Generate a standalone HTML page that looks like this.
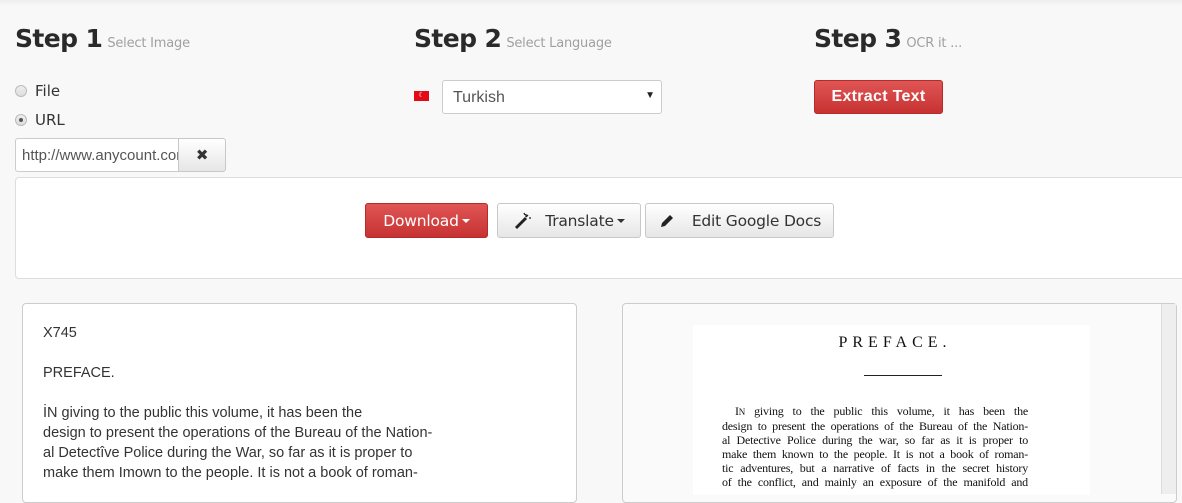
<!DOCTYPE html>
<html><head><meta charset="utf-8"><style>
*{box-sizing:border-box;margin:0;padding:0}
body{width:1182px;height:483px;overflow:hidden;background:#f8f8f8;font-family:"Liberation Sans",sans-serif;position:relative;color:#333}
.a{position:absolute}
h2{position:absolute;font-family:"DejaVu Sans","Liberation Sans",sans-serif;font-weight:bold;font-size:25px;color:#2a2a2a;letter-spacing:-0.6px;top:24px}
h2 small{font-family:"DejaVu Sans",sans-serif;font-weight:normal;font-size:13px;color:#a0a0a0;letter-spacing:-0.2px;margin-left:5px}
.radio{width:12px;height:12px;border-radius:50%;border:1px solid #bbb;background:linear-gradient(#eee,#ddd)}
.lbl{font-family:"DejaVu Sans",sans-serif;font-size:15px;color:#333}
.btn{position:absolute;border:1px solid #c8c8c8;border-radius:3px;background:linear-gradient(#fff,#e6e6e6);font-family:"DejaVu Sans",sans-serif;font-size:15.5px;color:#333;display:flex;align-items:center;justify-content:center;letter-spacing:-0.2px}
.red{background:linear-gradient(#e05555,#c73232);border-color:#b52a2a;color:#fff}
.caret{display:inline-block;border-left:4px solid transparent;border-right:4px solid transparent;border-top:4px solid currentColor;margin-left:3px;vertical-align:6px}
.ocr{font-size:14.5px;color:#333;line-height:20px}
.ser div{font-family:"Liberation Serif",serif;font-size:12px;color:#111;line-height:14px;text-align:justify;text-align-last:justify;white-space:nowrap;letter-spacing:-0.2px;word-spacing:-1px}
</style></head><body>
<div class="a" style="left:0;top:0;width:1182px;height:6px;background:linear-gradient(#eee,#f8f8f8)"></div>
<h2 style="left:15px">Step 1<small>Select Image</small></h2>
<h2 style="left:414px">Step 2<small>Select Language</small></h2>
<h2 style="left:814px">Step 3<small>OCR it ...</small></h2>

<div class="a radio" style="left:15px;top:85px"></div><div class="a lbl" style="left:35px;top:82px">File</div>
<div class="a radio" style="left:15px;top:114px;"><div style="width:4px;height:4px;border-radius:50%;background:#555;margin:3px"></div></div><div class="a lbl" style="left:35px;top:111px">URL</div>
<div class="a" style="left:15px;top:138px;width:165px;height:34px;background:#fff;border:1px solid #ccc;border-radius:3px 0 0 3px;font-size:15px;color:#555;padding:8px 6px;overflow:hidden;white-space:nowrap">http://www.anycount.com</div>
<div class="btn" style="left:178px;top:138px;width:48px;height:34px;border-radius:0 3px 3px 0;font-weight:bold;font-size:15px">✖</div>

<div class="a" style="left:414px;top:91px;width:15px;height:10px;background:#e30a17;color:#fff;font-size:7px;line-height:10px;text-align:center">☾</div>
<div class="a" style="left:442px;top:80px;width:220px;height:34px;background:#fff;border:1px solid #ccc;border-radius:3px;font-size:16px;color:#555;padding:8px 10px">Turkish<span style="position:absolute;right:6px;top:9px;font-size:10px;color:#222">▼</span></div>

<div class="btn red" style="left:814px;top:80px;width:129px;height:34px;font-family:'Liberation Sans',sans-serif;font-weight:bold;font-size:16px;letter-spacing:0.3px">Extract Text</div>

<div class="a" style="left:15px;top:177px;width:1180px;height:102px;background:#fff;border:1px solid #ddd;border-radius:4px"></div>
<div class="btn red" style="left:365px;top:203px;width:123px;height:35px">Download<span class="caret"></span></div>
<div class="btn" style="left:497px;top:203px;width:144px;height:35px"><svg width="20" height="18" viewBox="0 0 20 18" style="margin-right:12px"><path d="M3 16L13 6" stroke="#222" stroke-width="3"/><path d="M13 2v3M15 3l-2 2M11 1l1 2M16 6h2" stroke="#222" stroke-width="1.3"/></svg>Translate<span class="caret"></span></div>
<div class="btn" style="left:645px;top:203px;width:189px;height:35px"><svg width="18" height="18" viewBox="0 0 18 18" style="margin-right:16px"><path d="M3 15l1-4 8-8 3 3-8 8z" fill="#222"/></svg>Edit Google Docs</div>

<div class="a" style="left:22px;top:303px;width:555px;height:200px;background:#fff;border:1px solid #ccc;border-radius:4px;padding:19px 20px">
<div class="ocr">X745</div>
<div class="ocr" style="margin-top:20px">PREFACE.</div>
<div class="ocr" style="margin-top:20px">İN giving to the public this volume, it has been the<br>design to present the operations of the Bureau of the Nation-<br>al Detectîve Police during the War, so far as it is proper to<br>make them Imown to the people. It is not a book of roman-</div>
</div>

<div class="a" style="left:622px;top:303px;width:555px;height:200px;background:#fafafa;border:1px solid #ccc;border-radius:4px"></div>
<div class="a" style="left:1161px;top:304px;width:15px;height:190px;background:#eee;border-left:1px solid #ddd"></div>
<div class="a" style="left:693px;top:325px;width:397px;height:170px;background:#fff;padding:0 62px 0 29px">
<div style="text-align:center;font-family:'Liberation Serif',serif;font-size:16px;letter-spacing:5px;margin-top:9px;color:#111;padding-left:40px">PREFACE.</div>
<div style="width:78px;height:1px;background:#222;margin:23px 0 0 142px"></div>
<div class="ser" style="margin-top:28px">
<div style="padding-left:13px">I<span style="font-size:9px">N</span> giving to the public this volume, it has been the</div>
<div>design to present the operations of the Bureau of the Nation-</div>
<div>al Detective Police during the war, so far as it is proper to</div>
<div>make them known to the people. It is not a book of roman-</div>
<div>tic adventures, but a narrative of facts in the secret history</div>
<div>of the conflict, and mainly an exposure of the manifold and</div>
</div>
</div>
</body></html>
